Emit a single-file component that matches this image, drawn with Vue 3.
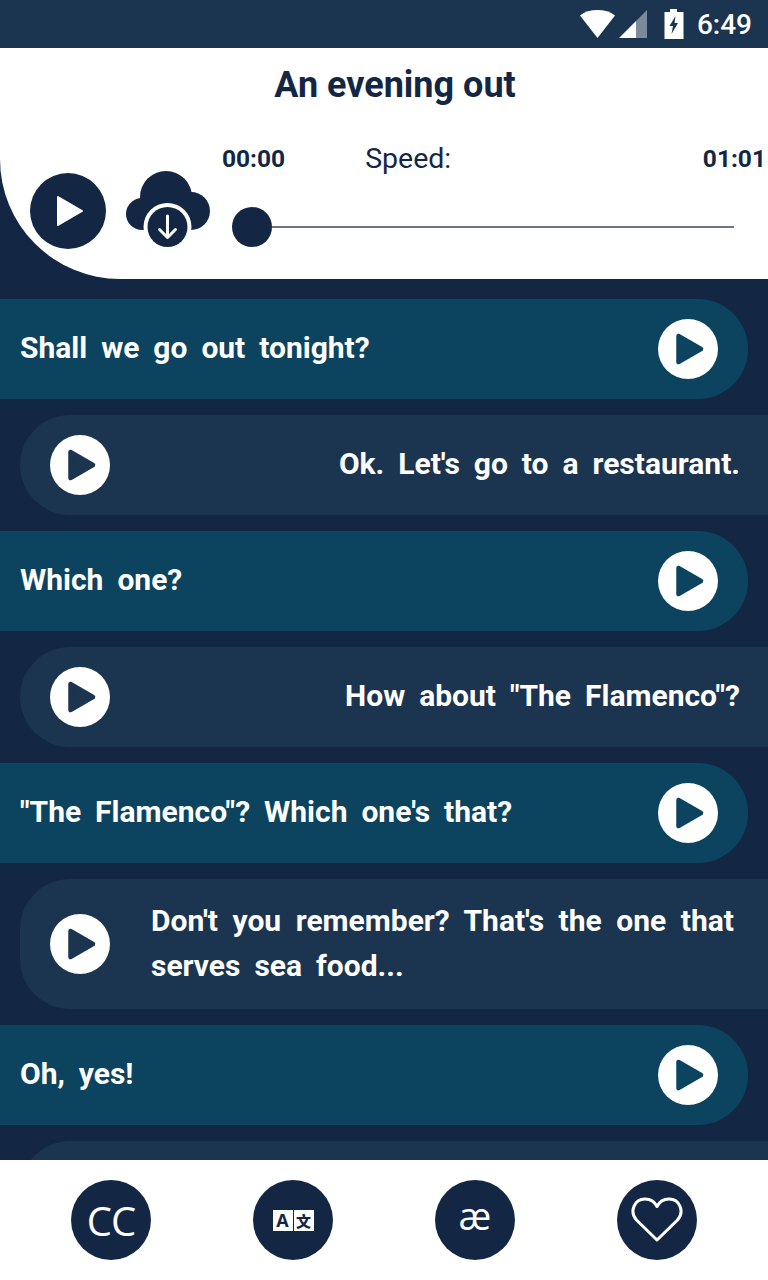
<script setup>
const lines = [
  { text: 'Shall we go out tonight?', side: 'a' },
  { text: "Ok. Let's go to a restaurant.", side: 'b' },
  { text: 'Which one?', side: 'a' },
  { text: 'How about "The Flamenco"?', side: 'b' },
  { text: '"The Flamenco"? Which one\'s that?', side: 'a' },
  { text: "Don't you remember? That's the one that serves sea food...", side: 'b', long: true },
  { text: 'Oh, yes!', side: 'a' },
  { text: '', side: 'b' },
]
</script>

<template>
  <div class="screen">
    <div class="status">
      <svg class="wifi" width="35" height="30" viewBox="0 0 35 30">
        <path d="M0 6.500C4.500 2.800 10.800 1 17.500 1S30.500 2.800 35 6.500L17.500 29Z" fill="#fff" />
      </svg>
      <svg class="signal" width="28" height="28" viewBox="0 0 28 28">
        <path d="M28 0V28H17V11Z" fill="#7b8a9b" />
        <path d="M17 11V28H0Z" fill="#fff" />
      </svg>
      <svg class="battery" width="20" height="30" viewBox="0 0 20 30">
        <path d="M6 0H13V3H19.500V30H0.500V3H6Z" fill="#fff" />
        <path d="M11.500 7L5.500 17H9L7.500 25L14 14H10.500Z" fill="#1b344f" />
      </svg>
      <span class="clock">6:49</span>
    </div>

    <header class="player">
      <h1 class="title">An evening out</h1>
      <div class="controls">
        <button class="big-play">
          <svg width="28" height="32" viewBox="0 0 28 32">
            <path d="M1 2L25 16L1 30Z" fill="#fff" stroke="#fff" stroke-width="2" stroke-linejoin="round" />
          </svg>
        </button>
        <svg class="cloud" width="84" height="78" viewBox="0 0 84 78">
          <g fill="#132745">
            <circle cx="40" cy="26" r="26" />
            <circle cx="16" cy="43" r="16" />
            <circle cx="65" cy="40" r="19" />
            <rect x="16" y="30" width="49" height="29" />
          </g>
          <circle cx="41.500" cy="56" r="24" fill="#fff" />
          <circle cx="41.500" cy="56" r="20" fill="#132745" />
          <path d="M41.500 45V66M33.500 58.500L41.500 66.500L49.500 58.500" fill="none" stroke="#fff" stroke-width="3" stroke-linecap="round" stroke-linejoin="round" />
        </svg>
        <div class="track-box">
          <div class="times">
            <span class="time">00:00</span>
            <span class="speed">Speed:</span>
            <span class="time end">01:01</span>
          </div>
          <div class="track">
            <span class="thumb"></span>
            <span class="bar"></span>
          </div>
        </div>
      </div>
    </header>

    <main class="dialog">
      <div v-for="(line, i) in lines" :key="i" class="row" :class="[line.side, { long: line.long }]">
        <button class="mini-play">
          <svg width="32" height="36" viewBox="0 0 32 36">
            <path d="M4.500 5L27 18L4.500 31Z" stroke-width="4.500" stroke-linejoin="round" />
          </svg>
        </button>
        <p class="line-text">{{ line.text }}</p>
      </div>
    </main>

    <footer class="tools">
      <button class="tool cc">CC</button>
      <button class="tool">
        <span class="lang">
          <span class="panel">A</span>
          <span class="panel zh">文</span>
        </span>
      </button>
      <button class="tool ae">æ</button>
      <button class="tool">
        <svg width="52" height="46" viewBox="0 0 52 46">
          <path d="M26 43L5.500 23C-2 14.500 3.500 2 14 2C19.500 2 23.500 4.500 26 9.500C28.500 4.500 32.500 2 38 2C48.500 2 54 14.500 46.500 23Z" fill="none" stroke="#fff" stroke-width="3" stroke-linejoin="round" />
        </svg>
      </button>
    </footer>
  </div>
</template>

<style scoped>
.screen {
  width: 768px;
  height: 1280px;
  display: flex;
  flex-direction: column;
  overflow: hidden;
  background: #132745;
  font-family: Roboto, sans-serif;
  color: #fff;
}

button {
  border: 0;
  padding: 0;
  margin: 0;
  display: flex;
  align-items: center;
  justify-content: center;
}

.status {
  height: 48px;
  flex: none;
  display: flex;
  align-items: center;
  padding-right: 16px;
  justify-content: flex-end;
  background: #1b344f;
}

.wifi {
  margin-right: 4px;
}

.signal {
  margin-right: 17px;
}

.battery {
  margin-right: 13px;
}

.clock {
  font-size: 28px;
  font-weight: 500;
}

.player {
  height: 231px;
  flex: none;
  background: #fff;
  border-bottom-left-radius: 120px;
  color: #132745;
}

.title {
  margin: 0;
  padding: 16px 0 0 22px;
  font-size: 36px;
  line-height: 42px;
  font-weight: 700;
  text-align: center;
}

.controls {
  display: flex;
  align-items: flex-start;
  padding: 0 0 0 30px;
  margin-top: 40px;
}

.big-play {
  width: 76px;
  height: 76px;
  margin-top: 27px;
  border-radius: 50%;
  background: #132745;
  flex: none;
}

.big-play svg {
  margin-left: 6px;
}

.cloud {
  flex: none;
  margin: 25px 0 0 20px;
}

.track-box {
  flex: 1;
  margin-left: 12px;
  padding-right: 2px;
}

.times {
  display: flex;
  align-items: center;
  height: 24px;
}

.time {
  font-size: 24.500px;
  font-weight: 700;
}

.speed {
  font-size: 28.500px;
  margin-left: 80px;
}

.end {
  margin-left: auto;
}

.track {
  display: flex;
  align-items: center;
  margin: 37px 32px 0 10px;
}

.thumb {
  width: 40px;
  height: 40px;
  flex: none;
  border-radius: 50%;
  background: #132745;
}

.bar {
  flex: 1;
  height: 2px;
  background: #6d7683;
}

.dialog {
  flex: 1;
  min-height: 0;
  overflow: hidden;
  display: flex;
  flex-direction: column;
  gap: 16px;
  padding-top: 20px;
}

.row {
  min-height: 100px;
  flex: none;
  display: flex;
  align-items: center;
  box-sizing: border-box;
}

.row.a {
  flex-direction: row-reverse;
  justify-content: space-between;
  margin-right: 20px;
  padding: 0 30px 0 20px;
  background: #0c4460;
  border-radius: 0 50px 50px 0;
}

.row.b {
  margin-left: 20px;
  padding: 0 28px 0 30px;
  background: #1b344f;
  border-radius: 50px 0 0 50px;
}

.line-text {
  margin: 0 0 4px;
  font-size: 30px;
  line-height: 45px;
  font-weight: 700;
  word-spacing: 6.500px;
}

.row.b .line-text {
  flex: 1;
  text-align: right;
}

.row.long {
  padding: 20px 34px 20px 30px;
}

.row.b.long .line-text {
  margin: -1px 0 1px 41px;
  text-align: justify;
}

.mini-play {
  width: 60px;
  height: 60px;
  flex: none;
  border-radius: 50%;
  background: #fff;
}

.mini-play svg {
  margin-left: 4px;
}

.a .mini-play path {
  fill: #0c4460;
  stroke: #0c4460;
}

.b .mini-play path {
  fill: #1b344f;
  stroke: #1b344f;
}

.tools {
  height: 120px;
  flex: none;
  display: flex;
  justify-content: center;
  align-items: center;
  gap: 102px;
  background: #fff;
}

.tool {
  width: 80px;
  height: 80px;
  flex: none;
  border-radius: 50%;
  background: #132745;
  color: #fff;
  font-family: "Open Sans", sans-serif;
}

.cc {
  font-size: 40px;
  letter-spacing: -1px;
}

.ae {
  font-size: 38px;
  padding-bottom: 10px;
}

.lang {
  display: flex;
  gap: 1px;
}

.panel {
  width: 20px;
  height: 21px;
  display: flex;
  align-items: center;
  justify-content: center;
  background: #fff;
  color: #132745;
  font-size: 18px;
  font-weight: 700;
}

.zh {
  font-family: "Noto Sans CJK SC", sans-serif;
  font-size: 15px;
  font-weight: 900;
}
</style>
